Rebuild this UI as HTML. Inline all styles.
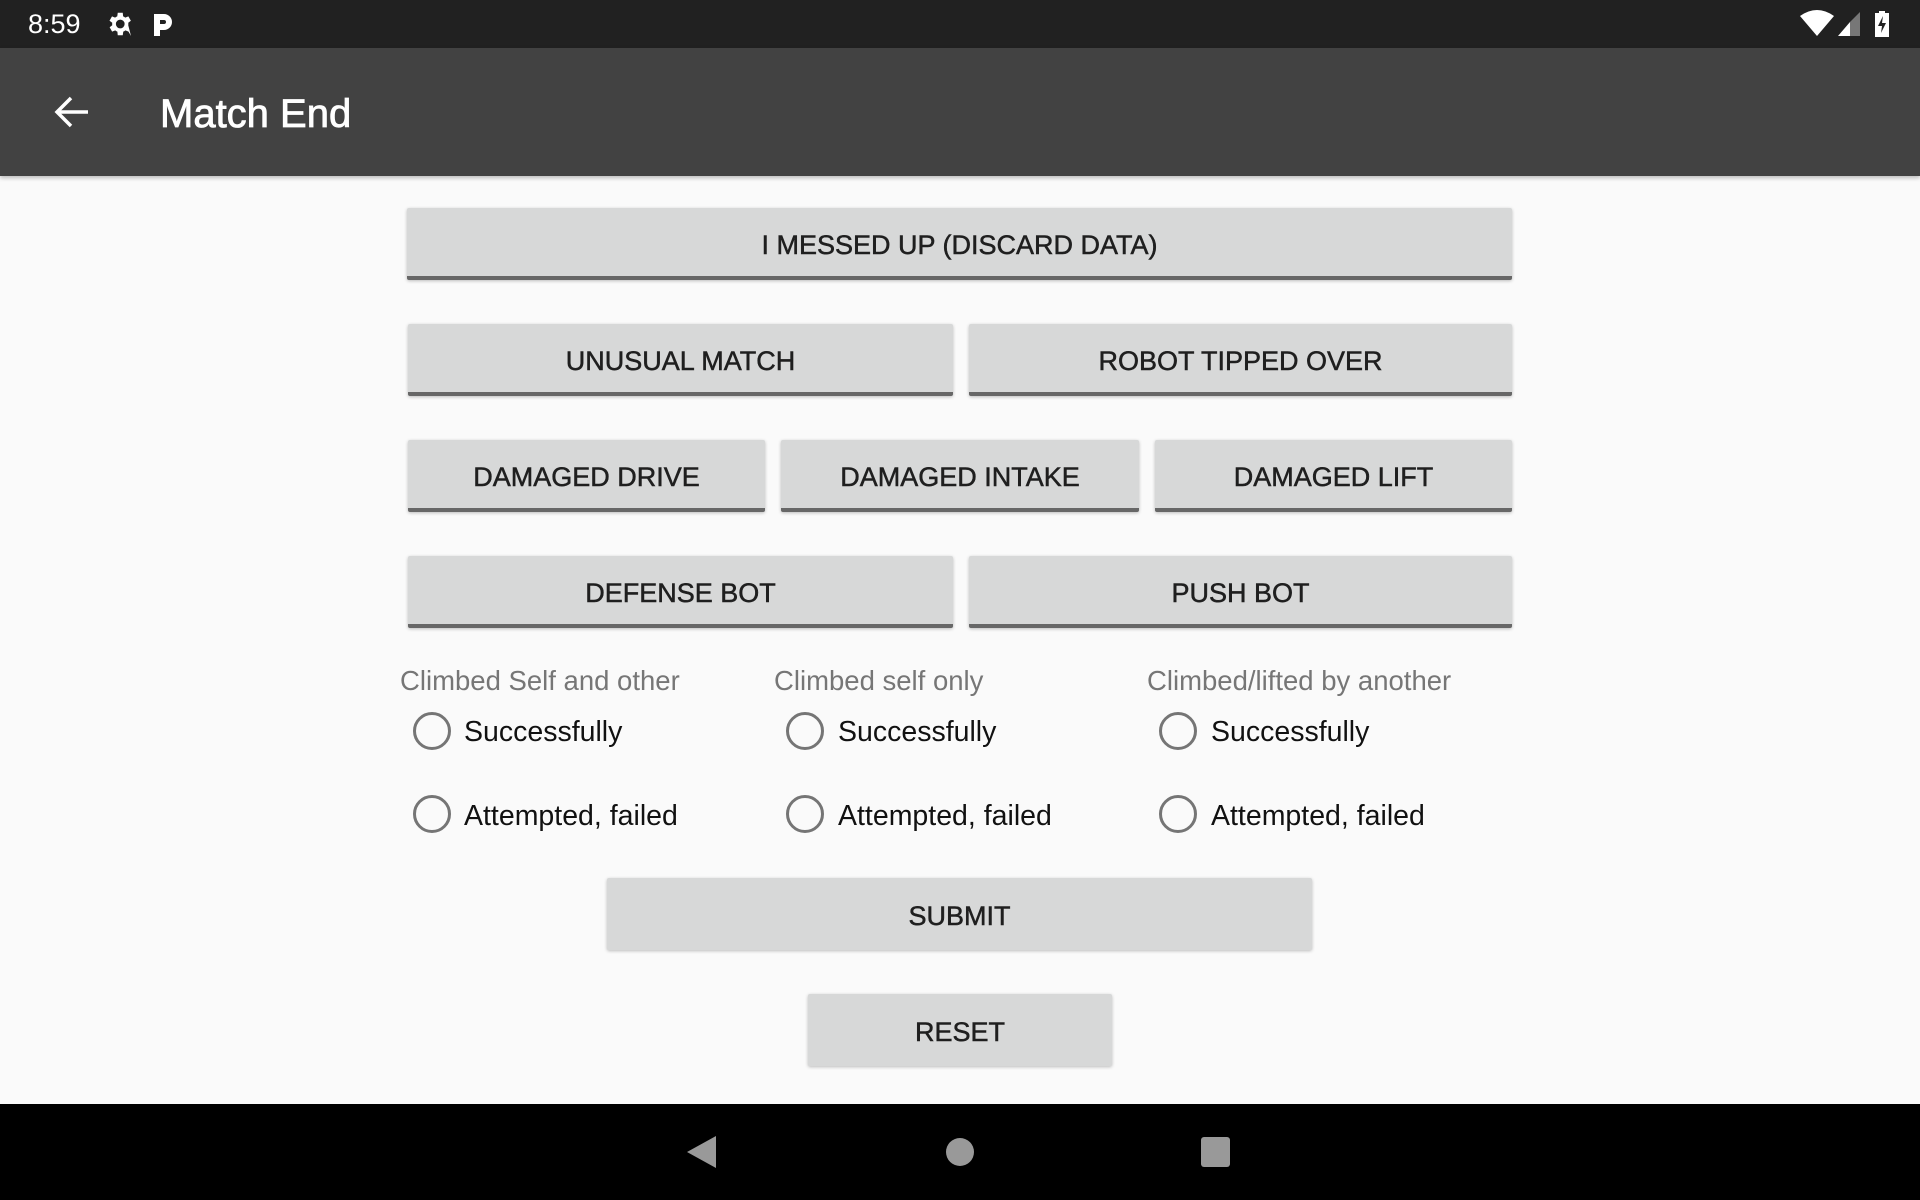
<!DOCTYPE html>
<html><head><meta charset="utf-8"><style>
*{margin:0;padding:0;box-sizing:border-box}
body{width:1920px;height:1200px;background:#fafafa;font-family:"Liberation Sans",sans-serif;position:relative;overflow:hidden}
.sb{position:absolute;left:0;top:0;width:1920px;height:48px;background:#212121;color:#fff}
.tb{position:absolute;left:0;top:48px;width:1920px;height:128px;background:#424242;color:#fff;box-shadow:0 2px 4px rgba(0,0,0,.25)}
.btn{position:absolute;background:#d7d8d8;color:#1f1f1f;font-size:27px;display:flex;align-items:center;justify-content:center;border-radius:2px;box-shadow:0 1px 3px rgba(0,0,0,.25);-webkit-text-stroke:0.5px #1f1f1f;padding-top:5px}
.u{border-bottom:4px solid #676767;padding-top:6px}
.lbl{position:absolute;color:#767676;font-size:27.5px}
.rad{position:absolute;width:38px;height:38px;border:3.5px solid #757575;border-radius:50%}
.rt{position:absolute;color:#111;font-size:28.5px}
.nav{position:absolute;left:0;top:1104px;width:1920px;height:96px;background:#000}
</style></head><body>
<div class="sb">
<div style="position:absolute;left:28px;top:9px;font-size:27px">8:59</div>
<svg style="position:absolute;left:104px;top:9px" width="30" height="30" viewBox="0 0 24 24"><path fill="#fff" d="M19.4 13a7.5 7.5 0 0 0 0-2l2.1-1.6-2-3.5-2.5 1a7 7 0 0 0-1.7-1L15 3h-4l-.4 2.9a7 7 0 0 0-1.7 1l-2.5-1-2 3.5L6.6 11a7.5 7.5 0 0 0 0 2l-2.1 1.6 2 3.5 2.5-1a7 7 0 0 0 1.7 1L11 21h4l.4-2.9a7 7 0 0 0 1.7-1l2.5 1 2 3.5zM13 15.5a3.5 3.5 0 1 1 0-7 3.5 3.5 0 0 1 0 7z"/></svg>
<svg style="position:absolute;left:152px;top:12px" width="22" height="26" viewBox="0 0 22 26"><path fill="#fff" d="M2 2h10a8 8 0 0 1 0 16H8v6H2zM8 8v4h4a2 2 0 0 0 0-4z"/></svg>
<svg style="position:absolute;left:1800px;top:10px" width="34" height="26" viewBox="0 0 34 26"><path fill="#fff" d="M0 6Q17-6 34 6L17 26z"/></svg>
<svg style="position:absolute;left:1838px;top:12px" width="22" height="24" viewBox="0 0 22 24"><path fill="#fff" d="M0 24L12 10v14z"/><path fill="#777" d="M12 10L22 0v24H12z"/></svg>
<svg style="position:absolute;left:1875px;top:11px" width="14" height="26" viewBox="0 0 14 26"><path fill="#fff" d="M4 0h6v2h4v24H0V2h4z"/><path fill="#212121" d="M8 5L3 15h4l-1 7 5-10H7z"/></svg>
</div>
<div class="tb">
<svg style="position:absolute;left:54px;top:47px" width="36" height="34" viewBox="0 0 36 34"><path d="M34 17H4M17 3L3 17l14 14" stroke="#fff" stroke-width="3.5" fill="none"/></svg>
<div style="position:absolute;left:160px;top:44px;font-size:40px;-webkit-text-stroke:0.8px #fff">Match End</div>
</div>
<div class="btn u" style="left:407px;top:208px;width:1105px;height:72px">I MESSED UP (DISCARD DATA)</div>
<div class="btn u" style="left:408px;top:324px;width:545px;height:72px">UNUSUAL MATCH</div>
<div class="btn u" style="left:969px;top:324px;width:543px;height:72px">ROBOT TIPPED OVER</div>
<div class="btn u" style="left:408px;top:440px;width:357px;height:72px">DAMAGED DRIVE</div>
<div class="btn u" style="left:781px;top:440px;width:358px;height:72px">DAMAGED INTAKE</div>
<div class="btn u" style="left:1155px;top:440px;width:357px;height:72px">DAMAGED LIFT</div>
<div class="btn u" style="left:408px;top:556px;width:545px;height:72px">DEFENSE BOT</div>
<div class="btn u" style="left:969px;top:556px;width:543px;height:72px">PUSH BOT</div>

<div class="lbl" style="left:400px;top:665px">Climbed Self and other</div>
<div class="lbl" style="left:774px;top:665px">Climbed self only</div>
<div class="lbl" style="left:1147px;top:665px">Climbed/lifted by another</div>

<div class="rad" style="left:413px;top:712px"></div><div class="rt" style="left:464px;top:716px">Successfully</div>
<div class="rad" style="left:413px;top:795px"></div><div class="rt" style="left:464px;top:800px">Attempted, failed</div>
<div class="rad" style="left:786px;top:712px"></div><div class="rt" style="left:838px;top:716px">Successfully</div>
<div class="rad" style="left:786px;top:795px"></div><div class="rt" style="left:838px;top:800px">Attempted, failed</div>
<div class="rad" style="left:1159px;top:712px"></div><div class="rt" style="left:1211px;top:716px">Successfully</div>
<div class="rad" style="left:1159px;top:795px"></div><div class="rt" style="left:1211px;top:800px">Attempted, failed</div>

<div class="btn" style="left:607px;top:878px;width:705px;height:72px">SUBMIT</div>
<div class="btn" style="left:808px;top:994px;width:304px;height:72px">RESET</div>

<div class="nav">
<svg style="position:absolute;left:687px;top:32px" width="30" height="32" viewBox="0 0 30 32"><path fill="#999" d="M29 0v32L0 16z"/></svg>
<div style="position:absolute;left:946px;top:34px;width:28px;height:28px;border-radius:50%;background:#999"></div>
<div style="position:absolute;left:1201px;top:33px;width:29px;height:30px;border-radius:3px;background:#999"></div>
</div>
</body></html>
